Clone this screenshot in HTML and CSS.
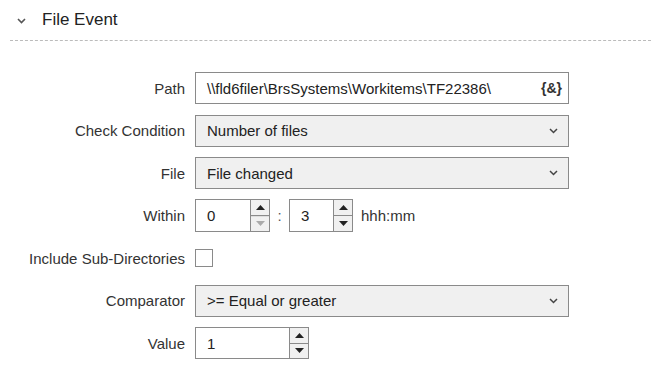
FILE: index.html
```html
<!DOCTYPE html>
<html>
<head>
    <title>File Event</title>
    <link rel="stylesheet" href="styles.css">
</head>
<body>
    <div class="panel">
        <div class="panel-header">
            <svg class="toggle" width="9" height="6" viewBox="0 0 9 6"><path d="M1 1l3.5 3.5L8 1" fill="none" stroke="#555" stroke-width="1.6"/></svg>
            <span class="panel-title">File Event</span>
        </div>

        <div class="form">
            <label class="form-label">Path</label>
            <div class="field text-field">
                <span class="field-text">\\fld6filer\BrsSystems\Workitems\TF22386\</span>
                <span class="var-button">{&amp;}</span>
            </div>

            <label class="form-label">Check Condition</label>
            <div class="field select">
                <span class="field-text">Number of files</span>
                <svg class="caret" width="9" height="6" viewBox="0 0 9 6"><path d="M1 1l3.5 3.5L8 1" fill="none" stroke="#444" stroke-width="1.5"/></svg>
            </div>

            <label class="form-label">File</label>
            <div class="field select">
                <span class="field-text">File changed</span>
                <svg class="caret" width="9" height="6" viewBox="0 0 9 6"><path d="M1 1l3.5 3.5L8 1" fill="none" stroke="#444" stroke-width="1.5"/></svg>
            </div>

            <label class="form-label">Within</label>
            <div class="within">
                <div class="spin spin-hours">
                    <span class="spin-value">0</span>
                    <div class="spin-buttons">
                        <span class="spin-up"><svg width="9" height="5" viewBox="0 0 9 5"><path d="M0 5L4.5 0L9 5z" fill="#222"/></svg></span>
                        <span class="spin-down disabled"><svg width="9" height="5" viewBox="0 0 9 5"><path d="M0 0L4.5 5L9 0z" fill="#aaa"/></svg></span>
                    </div>
                </div>
                <span class="colon">:</span>
                <div class="spin spin-minutes">
                    <span class="spin-value">3</span>
                    <div class="spin-buttons">
                        <span class="spin-up"><svg width="9" height="5" viewBox="0 0 9 5"><path d="M0 5L4.5 0L9 5z" fill="#222"/></svg></span>
                        <span class="spin-down"><svg width="9" height="5" viewBox="0 0 9 5"><path d="M0 0L4.5 5L9 0z" fill="#222"/></svg></span>
                    </div>
                </div>
                <span class="unit">hhh:mm</span>
            </div>

            <label class="form-label">Include Sub-Directories</label>
            <div class="check-cell">
                <span class="checkbox"></span>
            </div>

            <label class="form-label">Comparator</label>
            <div class="field select">
                <span class="field-text">&gt;= Equal or greater</span>
                <svg class="caret" width="9" height="6" viewBox="0 0 9 6"><path d="M1 1l3.5 3.5L8 1" fill="none" stroke="#444" stroke-width="1.5"/></svg>
            </div>

            <label class="form-label">Value</label>
            <div class="value-cell">
                <div class="spin spin-value-box">
                    <span class="spin-value">1</span>
                    <div class="spin-buttons">
                        <span class="spin-up"><svg width="9" height="5" viewBox="0 0 9 5"><path d="M0 5L4.5 0L9 5z" fill="#222"/></svg></span>
                        <span class="spin-down"><svg width="9" height="5" viewBox="0 0 9 5"><path d="M0 0L4.5 5L9 0z" fill="#222"/></svg></span>
                    </div>
                </div>
            </div>
        </div>
    </div>
</body>
</html>
```

FILE: styles.css
```css
body {
    font-family: "Liberation Sans", Arial, sans-serif;
    font-size: 15px;
    color: #222;
    margin: 0;
    background: #fff;
}
.panel-header {
    display: flex;
    align-items: center;
    height: 40px;
    margin-left: 10px;
    padding-left: 7px;
    border-bottom: 1px dashed #bbb;
}
.toggle {
    margin-right: 16px;
    margin-top: 2px;
}
.panel-title {
    font-size: 17px;
    color: #222;
}
.form {
    display: grid;
    grid-template-columns: 185px 374px;
    column-gap: 10px;
    row-gap: 10.5px;
    margin-top: 31px;
}
.form-label {
    display: flex;
    align-items: center;
    justify-content: flex-end;
    height: 32px;
    color: #333;
}
.field {
    display: flex;
    align-items: center;
    height: 32px;
    box-sizing: border-box;
    border: 1px solid #8a8a8a;
    padding: 0 10px 0 11px;
}
.field-text {
    flex: 1;
    white-space: nowrap;
}
.text-field {
    background: #fff;
}
.var-button {
    font-weight: bold;
    font-size: 14px;
    color: #333;
    margin-right: -4px;
}
.select {
    background: #f0f0f0;
}
.within {
    display: flex;
    align-items: center;
    height: 32px;
}
.spin {
    display: flex;
    height: 33px;
    box-sizing: border-box;
    border: 1px solid #8a8a8a;
    background: #fff;
}
.spin-value {
    flex: 1;
    display: flex;
    align-items: center;
    padding-left: 11px;
}
.spin-buttons {
    display: flex;
    flex-direction: column;
    width: 18px;
    border-left: 1px solid #8a8a8a;
    background: #f0f0f0;
}
.spin-up, .spin-down {
    flex: 1;
    display: flex;
    align-items: center;
    justify-content: center;
}
.spin-up {
    border-bottom: 1px solid #8a8a8a;
}
.spin-down.disabled {
    border-top: 1px solid #ddd;
}
.spin-hours {
    width: 75px;
}
.spin-minutes {
    width: 64px;
}
.colon {
    width: 19px;
    text-align: center;
    color: #555;
}
.unit {
    margin-left: 8px;
    color: #333;
}
.check-cell, .value-cell {
    display: flex;
    align-items: center;
    height: 32px;
}
.checkbox {
    display: block;
    width: 18px;
    height: 18px;
    box-sizing: border-box;
    border: 1px solid #8a8a8a;
    background: #fff;
}
.spin-value-box {
    width: 114px;
    height: 32px;
}
```
